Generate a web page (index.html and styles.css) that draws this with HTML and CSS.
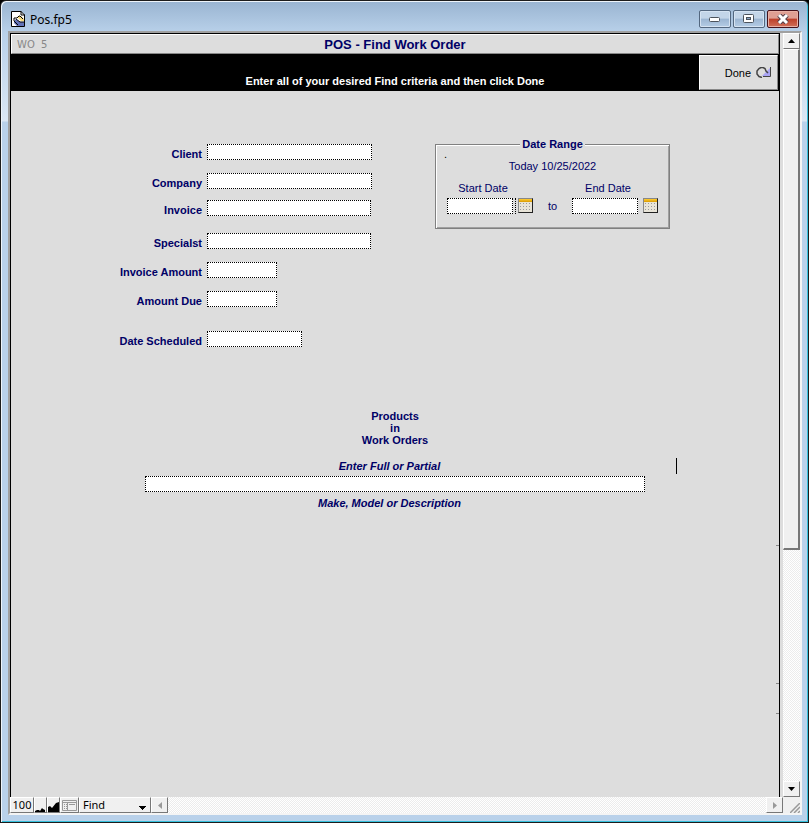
FILE: index.html
```
<!DOCTYPE html>
<html lang="en">
<head>
    <meta charset="UTF-8">
    <meta name="viewport" content="width=device-width, initial-scale=1.0">
    <title>Pos.fp5</title>
    <link rel="stylesheet" href="styles.css">
</head>
<body>

<div class="window">
    <!-- Title bar -->
    <header class="titlebar">
        <svg class="app-icon" width="14" height="16" viewBox="0 0 14 16" aria-hidden="true">
            <path d="M0.5 0.5H10L13.5 4V15.5H0.5Z" fill="#fff" stroke="#000"/>
            <path d="M10 0V4H14" fill="none" stroke="#000"/>
            <path d="M6 6L8 5H10L13 8V10H10Z" fill="#f8dc80"/>
            <path d="M3 10L5 8L9 11H13V15H6L3 12Z" fill="#6272b8"/>
            <path d="M3 10V7H6L8 5H9L12 8M5 8L9 11H13M3 10L7 14" fill="none" stroke="#000"/>
        </svg>
        <span class="window-name">Pos.fp5</span>
        <div class="window-buttons">
            <button class="win-btn" type="button" aria-label="Minimize">
                <svg width="12" height="6" viewBox="0 0 12 6"><rect x="0.5" y="1.5" width="10" height="4" rx="1" fill="#fff" stroke="#4c535c"/></svg>
            </button>
            <button class="win-btn" type="button" aria-label="Maximize">
                <svg width="12" height="10" viewBox="0 0 12 10"><rect x="0.5" y="0.5" width="10" height="8" rx="1" fill="#fff" stroke="#4c535c"/><rect x="3.5" y="3.5" width="4" height="2" fill="#8aa6c6" stroke="#4c535c"/></svg>
            </button>
            <button class="win-btn win-btn-close" type="button" aria-label="Close">
                <svg width="14" height="10" viewBox="0 0 14 10"><path d="M3 1L11 9M11 1L3 9" stroke="#53404a" stroke-width="5"/><path d="M3 1L11 9M11 1L3 9" stroke="#fff" stroke-width="3"/></svg>
            </button>
        </div>
    </header>

    <div class="client">
        <div class="view">
            <!-- Layout -->
            <main class="layout">
                <div class="layout-title">
                    <span class="record">WO&nbsp; 5</span>
                    <h1>POS - Find Work Order</h1>
                </div>
                <div class="banner">
                    <p>Enter all of your desired Find criteria and then click Done</p>
                    <button class="done" type="button">
                        Done
                        <svg width="15" height="11" viewBox="0 0 15 11" aria-hidden="true">
                            <path d="M14 1V9H6Z" fill="#a9a4f4"/>
                            <path d="M14.500 0V9.500H7" fill="none" stroke="#444"/>
                            <path d="M6 10.500L3 9.500L1 7V4L3 1.500L5 0.500H7L9 1.500L10 4L12 6" fill="none" stroke="#444" stroke-width="1.500"/>
                        </svg>
                    </button>
                </div>

                <form class="find-form">
                    <div class="criteria">
                        <div class="fields">
                            <div class="field"><label for="client">Client</label><input id="client" class="w-long" type="text"></div>
                            <div class="field tight"><label for="company">Company</label><input id="company" class="w-long" type="text"></div>
                            <div class="field loose"><label for="invoice">Invoice</label><input id="invoice" class="w-medium" type="text"></div>
                            <div class="field"><label for="specialist">Specialst</label><input id="specialist" class="w-medium" type="text"></div>
                            <div class="field"><label for="amount">Invoice Amount</label><input id="amount" class="w-short" type="text"></div>
                            <div class="field section"><label for="due">Amount Due</label><input id="due" class="w-short" type="text"></div>
                            <div class="field"><label for="scheduled">Date Scheduled</label><input id="scheduled" class="w-date" type="text"></div>
                        </div>

                        <fieldset class="date-range">
                            <legend>Date Range</legend>
                            <span class="dot">.</span>
                            <p class="today">Today 10/25/2022</p>
                            <div class="dates">
                                <div class="date">
                                    <label for="start">Start Date</label>
                                    <div class="picker">
                                        <input id="start" type="text">
                                        <span class="divider"></span>
                                        <button class="calendar" type="button" aria-label="Pick start date"></button>
                                    </div>
                                </div>
                                <span class="to">to</span>
                                <div class="date">
                                    <label for="end">End Date</label>
                                    <div class="picker">
                                        <input id="end" type="text">
                                        <button class="calendar" type="button" aria-label="Pick end date"></button>
                                    </div>
                                </div>
                            </div>
                        </fieldset>
                    </div>

                    <div class="products">
                        <h2>Products<br>in<br>Work Orders</h2>
                        <label class="hint" for="product">Enter Full or Partial</label>
                        <input id="product" type="text">
                        <p class="hint">Make, Model or Description</p>
                    </div>
                </form>
                <span class="caret"></span>
                <span class="tick tick-1"></span>
                <span class="tick tick-2"></span>
                <span class="tick tick-3"></span>
            </main>

            <!-- Vertical scrollbar -->
            <div class="scroll-v">
                <button class="bevel arrow" type="button" aria-label="Scroll up"><svg width="7" height="4" viewBox="0 0 7 4"><path d="M0 4L3.500 0L7 4Z"/></svg></button>
                <div class="track">
                    <div class="bevel thumb"></div>
                </div>
                <button class="bevel arrow" type="button" aria-label="Scroll down"><svg width="7" height="4" viewBox="0 0 7 4"><path d="M0 0H7L3.500 4Z"/></svg></button>
            </div>
        </div>

        <!-- Status bar -->
        <footer class="status">
            <button class="bevel zoom" type="button">100</button>
            <button class="bevel zoom-out" type="button" aria-label="Zoom out"><svg width="10" height="5" viewBox="0 0 10 5"><path d="M0 5V4L2 3H4L5 4L7 1L8 2L10 3V5Z"/></svg></button>
            <button class="bevel zoom-in" type="button" aria-label="Zoom in"><svg width="11" height="10" viewBox="0 0 11 10"><path d="M0 10V5L2 4L4 6L8 1L11 0V10Z"/></svg></button>
            <button class="bevel toggle" type="button" aria-label="Status area">
                <svg width="15" height="11" viewBox="0 0 15 11"><path d="M0.500 0.500H14.500V10.500H0.500ZM0.500 2.500H14.500M5.500 2.500V10.500M7 4.500H13" fill="none" stroke="#999"/><path d="M2 4.500H5M2 6.500H5M2 8.500H5" stroke="#999" stroke-dasharray="1 1"/></svg>
            </button>
            <select class="mode bevel" aria-label="Mode">
                <option>Find</option>
            </select>
            <button class="bevel arrow off" type="button" aria-label="Scroll left"><svg width="4" height="7" viewBox="0 0 4 7"><path d="M4 0V7L0 3.500Z"/></svg></button>
            <div class="track"></div>
            <button class="bevel arrow off" type="button" aria-label="Scroll right"><svg width="4" height="7" viewBox="0 0 4 7"><path d="M0 0V7L4 3.500Z"/></svg></button>
            <div class="grip"><svg width="10" height="10" viewBox="0 0 10 10"><path d="M0 10L10 0M4 10L10 4M8 10L10 8" stroke="#999" stroke-width="1.500"/></svg></div>
        </footer>
    </div>
</div>

</body>
</html>
```
FILE: styles.css
```
* {
    box-sizing: border-box;
}
body {
    margin: 0;
    background-color: #000;
    font-family: "Liberation Sans", Arial, sans-serif;
    font-size: 11px;
    color: #000066;
}
h1, h2, p {
    margin: 0;
}
button, input, select {
    margin: 0;
    padding: 0;
    border-radius: 0;
    font: inherit;
    color: #000;
}
svg {
    display: block;
}

/* Window frame */
.window {
    display: flex;
    flex-direction: column;
    height: 100vh;
    padding: 0 6px 7px 7px;
    border: 1px solid #1c1c1c;
    border-radius: 6px 6px 0 0;
    background: linear-gradient(#99b4d1, #b9d1ea 32px, #dbe7f4 120px, #b9d1ea 121px);
    box-shadow: inset 1px 1px 0 #eef4fa, inset -1px -1px 0 #35c0dc;
}
.titlebar {
    display: flex;
    align-items: center;
    height: 30px;
    padding: 6px 3px 0 3px;
}
.window-name {
    flex: 1;
    margin-left: 5px;
    font-family: "Noto Sans", sans-serif;
    font-size: 12px;
    color: #000;
}
.window-buttons {
    display: flex;
    gap: 2px;
}
.win-btn {
    display: flex;
    align-items: center;
    justify-content: center;
    width: 32px;
    height: 18px;
    border: 1px solid #53677f;
    border-radius: 2px;
    background: linear-gradient(#c3d5e8 45%, #9bb5d2 50%, #b5cde6);
    box-shadow: inset 0 0 0 1px #d5e3f2;
}
.win-btn-close {
    border-color: #45121b;
    background: linear-gradient(#df9f93 45%, #bd3f29 50%, #d0705a);
    box-shadow: inset 0 0 0 1px #e8b0a5;
}
.client {
    display: flex;
    flex: 1;
    flex-direction: column;
    min-height: 0;
    border: 2px solid #a0a0a0;
    border-color: #a0a0a0 #f4f4f4 #f4f4f4 #a0a0a0;
    background-color: #ddd;
}
.view {
    display: flex;
    flex: 1;
    min-height: 0;
}

/* Layout */
.layout {
    position: relative;
    flex: 1;
    margin-right: 3px;
    border: 1px solid #000;
    border-bottom: 0;
    background-color: #ddd;
}
.layout-title {
    display: grid;
    grid-template-columns: 1fr auto 1fr;
    align-items: center;
    height: 20px;
    padding: 0 5px;
    border: 1px solid #fff;
    border-right-color: #888;
    border-bottom-color: #888;
}
.layout-title h1 {
    font-size: 13px;
}
.record {
    font-family: "DejaVu Sans", sans-serif;
    font-size: 10px;
    color: #888;
}
.banner {
    position: relative;
    height: 37px;
    padding-top: 20px;
    background-color: #000;
    color: #fff;
    font-weight: bold;
    line-height: 14px;
    text-align: center;
}
.done {
    position: absolute;
    top: 1px;
    right: 1px;
    display: flex;
    align-items: center;
    justify-content: flex-end;
    gap: 5px;
    width: 79px;
    height: 35px;
    padding-right: 6px;
    border: 1px solid #fff;
    border-right-color: #888;
    border-bottom-color: #888;
    background-color: #ddd;
    font-weight: normal;
}

/* Find criteria */
.find-form input {
    height: 16px;
    border: 1px dotted #000;
    background-color: #fff;
}
.criteria {
    display: flex;
    align-items: flex-start;
    padding-top: 53px;
}
.fields {
    width: 424px;
}
.field {
    display: flex;
    gap: 5px;
    height: 16px;
    margin-bottom: 13px;
}
.field.tight {
    margin-bottom: 11px;
}
.field.loose {
    margin-bottom: 17px;
}
.field.section {
    margin-bottom: 24px;
}
.field label {
    width: 191px;
    padding-top: 4px;
    font-weight: bold;
    line-height: 12px;
    text-align: right;
}
.w-long {
    width: 165px;
}
.w-medium {
    width: 164px;
}
.w-short {
    width: 70px;
}
.w-date {
    width: 95px;
}

/* Date range */
.date-range {
    position: relative;
    width: 235px;
    margin: -6px 0 0;
    padding: 0 11px 14px;
    border: 1px solid #808080;
    box-shadow: inset 1px 1px 0 #fff, inset -1px -1px 0 #a0a0a0;
}
.date-range legend {
    margin: 0 auto;
    padding: 0 2px;
    background-color: #ddd;
    font-weight: bold;
    line-height: 12px;
}
.dot {
    position: absolute;
    top: -2px;
    left: 8px;
    color: #000;
}
.today {
    padding-top: 10px;
    line-height: 12px;
    text-align: center;
}
.dates {
    display: flex;
    align-items: flex-end;
    justify-content: space-between;
    margin-top: 10px;
}
.date label {
    display: block;
    width: 72px;
    line-height: 12px;
    text-align: center;
}
.picker {
    display: flex;
    gap: 5px;
    margin-top: 4px;
}
.picker input {
    width: 66px;
}
.divider {
    width: 1px;
    margin: 0 -3px;
    border-left: 1px dotted #000;
}
.to {
    line-height: 16px;
}
.calendar {
    width: 15px;
    height: 15px;
    border: 1px solid #888;
    border-right-color: #222;
    border-bottom-color: #222;
    background:
        linear-gradient(#fc3, #d99a00) 0 0 / 100% 3px no-repeat,
        radial-gradient(circle, #999 1px, #e8e4d8 1px) 0 3px / 3px 3px;
}

/* Products */
.products {
    display: flex;
    flex-direction: column;
    align-items: center;
    margin-top: 50px;
    text-align: center;
}
.products h2 {
    margin-bottom: 14px;
    font-size: 11px;
    line-height: 12px;
}
.products input {
    width: 65%;
    margin: 4px 0 5px;
}
.hint {
    padding-right: 11px;
    font-style: italic;
    font-weight: bold;
    line-height: 12px;
}
.caret {
    position: absolute;
    top: 424px;
    left: 665px;
    width: 1px;
    height: 16px;
    background-color: #000;
}
.tick {
    position: absolute;
    right: 0;
    width: 3px;
    height: 1px;
    background-color: #888;
}
.tick-1 {
    top: 511px;
}
.tick-2 {
    top: 649px;
}
.tick-3 {
    top: 679px;
}

/* Scrollbars */
.bevel {
    border: 1px solid #fff;
    border-right-color: #777;
    border-bottom-color: #777;
    background-color: #f0f0f0;
}
.scroll-v {
    display: flex;
    flex-direction: column;
    width: 17px;
}
.track {
    flex: 1;
    background: repeating-conic-gradient(#fff 0 25%, #ececec 0 50%) 0 0 / 2px 2px;
}
.thumb {
    height: 68.5%;
    border-right-width: 2px;
    border-bottom-width: 2px;
}
.arrow {
    display: flex;
    align-items: center;
    justify-content: center;
    width: 17px;
    height: 16px;
}
.off {
    fill: #999;
}

/* Status bar */
.status {
    display: flex;
    height: 16px;
    font-family: "Noto Sans", sans-serif;
    font-size: 11px;
    line-height: 14px;
}
.zoom {
    width: 24px;
}
.zoom-out, .zoom-in {
    display: flex;
    align-items: flex-end;
    width: 13px;
}
.toggle {
    display: flex;
    align-items: center;
    justify-content: center;
    width: 19px;
}
.mode {
    width: 72px;
    padding-left: 3px;
    appearance: none;
    background-image: linear-gradient(45deg, transparent 50%, #000 50%), linear-gradient(315deg, transparent 50%, #000 50%);
    background-position: right 7px top 8px, right 3px top 8px;
    background-size: 4px 4px;
    background-repeat: no-repeat;
}
.grip {
    display: flex;
    align-items: flex-end;
    justify-content: flex-end;
    width: 17px;
    background-color: #f0f0f0;
}
```
